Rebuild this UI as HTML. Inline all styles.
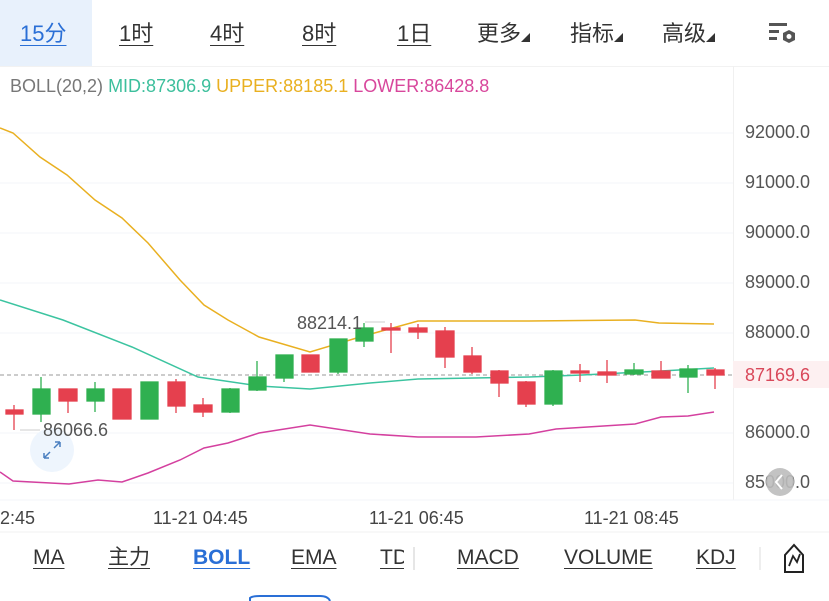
<!DOCTYPE html>
<html><head><meta charset="utf-8"><style>
*{margin:0;padding:0;box-sizing:border-box}
body{width:829px;height:601px;overflow:hidden;background:#fff;font-family:"Liberation Sans","Noto Sans CJK SC",sans-serif;position:relative}
.t{position:absolute;top:22px;line-height:24px;font-size:22px;color:#333;text-decoration:underline;text-underline-offset:4px;text-decoration-thickness:1px}
.m{position:absolute;top:22px;line-height:24px;font-size:22px;color:#333}
.ax{position:absolute;left:745px;font-size:18px;line-height:20px;color:#555}
.tm{position:absolute;top:508px;font-size:18px;line-height:20px;color:#444}
.b{position:absolute;top:546px;line-height:24px;font-size:21px;color:#333;text-decoration:underline;text-underline-offset:4px;text-decoration-thickness:1px}
</style></head><body>
<div style="position:absolute;left:0;top:0;width:92px;height:66px;background:#e8f1fc"></div>
<div class="t" style="left:20px;color:#2a6fd6">15分</div>
<div class="t" style="left:119px">1时</div>
<div class="t" style="left:210px">4时</div>
<div class="t" style="left:302px">8时</div>
<div class="t" style="left:397px">1日</div>
<div class="m" style="left:477px">更多<span style="font-size:9px">◢</span></div>
<div class="m" style="left:570px">指标<span style="font-size:9px">◢</span></div>
<div class="m" style="left:662px">高级<span style="font-size:9px">◢</span></div>
<svg style="position:absolute;left:768px;top:21px" width="30" height="26" viewBox="0 0 30 26"><g fill="#555"><rect x="1" y="2" width="18" height="3"/><rect x="1" y="9" width="10" height="3"/><rect x="1" y="16" width="8" height="3"/></g><polygon points="21,9 27,12 27,19 21,22 15,19 15,12" fill="#555"/><circle cx="21" cy="15.5" r="2.5" fill="#fff"/></svg>
<div style="position:absolute;left:0;top:66px;width:829px;height:1px;background:#f2f2f2"></div>
<div style="position:absolute;left:10px;top:76px;font-size:18px;line-height:20px;color:#777;white-space:nowrap">BOLL(20,2) <span style="color:#3cbf9c">MID:87306.9</span> <span style="color:#e9b021">UPPER:88185.1</span> <span style="color:#d8479c">LOWER:86428.8</span></div>
<div style="position:absolute;left:733px;top:66px;width:1px;height:434px;background:#f0f0f0"></div>
<svg style="position:absolute;left:0;top:0" width="829" height="601">
<g stroke="#f3f5f8" stroke-width="1"><line x1="0" y1="133" x2="733" y2="133"/><line x1="0" y1="183" x2="733" y2="183"/><line x1="0" y1="233" x2="733" y2="233"/><line x1="0" y1="283" x2="733" y2="283"/><line x1="0" y1="333" x2="733" y2="333"/><line x1="0" y1="433" x2="733" y2="433"/><line x1="0" y1="483" x2="733" y2="483"/><line x1="0" y1="500" x2="829" y2="500"/></g>
<line x1="0" y1="375" x2="740" y2="375" stroke="#999" stroke-dasharray="4,3"/>
<g fill="none" stroke-width="1.5">
<polyline stroke="#e9b021" points="0,128 13,133 40,157 67,175 95,200 122,218 148,243 180,280 204,305 228,320 259,337 310,352 360,337 418,321 529,321 635,320 659,323 714,324"/>
<polyline stroke="#3cc4a0" points="0,300 63,320 132,347 198,377 259,386 310,389 370,383 418,379 529,377 582,375 661,371 714,368"/>
<polyline stroke="#d4409f" points="0,472 13,481 69,484 98,480 122,482 148,473 180,460 204,448 228,443 259,433 310,425 370,434 418,437 476,437 529,434 556,429 635,424 661,417 688,416 714,412"/>
</g>
<g stroke-width="1.3">
<g stroke="#e5404e" fill="#e5404e">
<line x1="14" y1="405" x2="14" y2="430"/><rect x="6" y="410" width="17" height="4"/>
<line x1="68" y1="389" x2="68" y2="413"/><rect x="59" y="389" width="18" height="12"/>
<rect x="113" y="389" width="18" height="30"/>
<line x1="176" y1="379" x2="176" y2="413"/><rect x="168" y="382" width="17" height="24"/>
<line x1="203" y1="398" x2="203" y2="417"/><rect x="194" y="405" width="18" height="7"/>
<rect x="302" y="355" width="17" height="17"/>
<line x1="391" y1="323" x2="391" y2="353"/><rect x="382" y="328" width="18" height="2"/>
<line x1="418" y1="324" x2="418" y2="339"/><rect x="409" y="328" width="18" height="4"/>
<line x1="445" y1="327" x2="445" y2="368"/><rect x="436" y="331" width="18" height="26"/>
<line x1="472" y1="347" x2="472" y2="374"/><rect x="464" y="356" width="17" height="16"/>
<line x1="499" y1="370" x2="499" y2="397"/><rect x="491" y="371" width="17" height="12"/>
<line x1="526" y1="381" x2="526" y2="407"/><rect x="518" y="382" width="17" height="22"/>
<line x1="580" y1="364" x2="580" y2="382"/><rect x="571" y="371" width="18" height="2"/>
<line x1="607" y1="360" x2="607" y2="383"/><rect x="598" y="372" width="18" height="3"/>
<line x1="661" y1="361" x2="661" y2="378"/><rect x="652" y="371" width="18" height="7"/>
<line x1="715" y1="368" x2="715" y2="389"/><rect x="707" y="370" width="17" height="5"/>
</g>
<g stroke="#2fb050" fill="#2fb050">
<line x1="41" y1="377" x2="41" y2="422"/><rect x="33" y="389" width="17" height="25"/>
<line x1="95" y1="382" x2="95" y2="412"/><rect x="87" y="389" width="17" height="12"/>
<rect x="141" y="382" width="17" height="37"/>
<line x1="230" y1="388" x2="230" y2="413"/><rect x="222" y="389" width="17" height="23"/>
<line x1="257" y1="361" x2="257" y2="391"/><rect x="249" y="377" width="17" height="13"/>
<line x1="284" y1="355" x2="284" y2="382"/><rect x="276" y="355" width="17" height="23"/>
<line x1="338" y1="339" x2="338" y2="374"/><rect x="330" y="339" width="17" height="33"/>
<line x1="364" y1="323" x2="364" y2="347"/><rect x="356" y="328" width="17" height="13"/>
<line x1="553" y1="370" x2="553" y2="406"/><rect x="545" y="371" width="17" height="33"/>
<line x1="634" y1="363" x2="634" y2="375"/><rect x="625" y="370" width="18" height="4"/>
<line x1="688" y1="365" x2="688" y2="393"/><rect x="680" y="369" width="17" height="8"/>
</g></g>
<line x1="20" y1="430" x2="40" y2="430" stroke="#ccc"/>
<line x1="365" y1="322" x2="385" y2="322" stroke="#ccc"/>
<circle cx="52" cy="450" r="22" fill="#eef5fd"/>
<g stroke="#4a7fc0" stroke-width="1.5" fill="none"><path d="M44 458 L50 452 M44 458 L44 453 M44 458 L49 458"/><path d="M60 442 L54 448 M60 442 L55 442 M60 442 L60 447"/></g>
<line x1="0" y1="532" x2="829" y2="532" stroke="#f2f2f2"/>
<line x1="414" y1="547" x2="414" y2="570" stroke="#ccc"/>
<line x1="760" y1="547" x2="760" y2="570" stroke="#ddd"/>
<path d="M785 555 L794 545 L803 555 L803 572 L785 572 Z" fill="none" stroke="#222" stroke-width="2"/>
<path d="M789 566 L793 556 L797 562 L800 554" fill="none" stroke="#222" stroke-width="1.8"/>
<path d="M250 601 L250 598 Q252 596 260 596 L320 596 Q328 596 330 601" fill="none" stroke="#2a6fd6" stroke-width="2"/>
</svg>
<div style="position:absolute;left:733px;top:361px;width:96px;height:27px;background:#fdf0f1"></div>
<div class="ax" style="top:122px">92000.0</div>
<div class="ax" style="top:172px">91000.0</div>
<div class="ax" style="top:222px">90000.0</div>
<div class="ax" style="top:272px">89000.0</div>
<div class="ax" style="top:322px">88000.0</div>
<div class="ax" style="top:365px;color:#d9485a">87169.6</div>
<div class="ax" style="top:422px">86000.0</div>
<div class="ax" style="top:472px">85000.0</div>
<svg style="position:absolute;left:0;top:0" width="829" height="601">
<circle cx="780" cy="482" r="14" fill="#bdbdbd" fill-opacity="0.9"/>
<path d="M782 475 L776 482 L782 489" stroke="#fff" stroke-width="2" fill="none"/>
</svg>
<div style="position:absolute;left:297px;top:313px;font-size:18px;line-height:20px;color:#555">88214.1</div>
<div style="position:absolute;left:43px;top:420px;font-size:18px;line-height:20px;color:#555">86066.6</div>
<div class="tm" style="left:0">2:45</div>
<div class="tm" style="left:153px">11-21 04:45</div>
<div class="tm" style="left:369px">11-21 06:45</div>
<div class="tm" style="left:584px">11-21 08:45</div>
<div class="b" style="left:33px">MA</div>
<div class="b" style="left:108px">主力</div>
<div class="b" style="left:193px;color:#2a6fd6;font-weight:bold">BOLL</div>
<div class="b" style="left:291px">EMA</div>
<div class="b" style="left:380px;width:24px;overflow:hidden">TD</div>
<div class="b" style="left:457px">MACD</div>
<div class="b" style="left:564px">VOLUME</div>
<div class="b" style="left:696px">KDJ</div>
</body></html>
